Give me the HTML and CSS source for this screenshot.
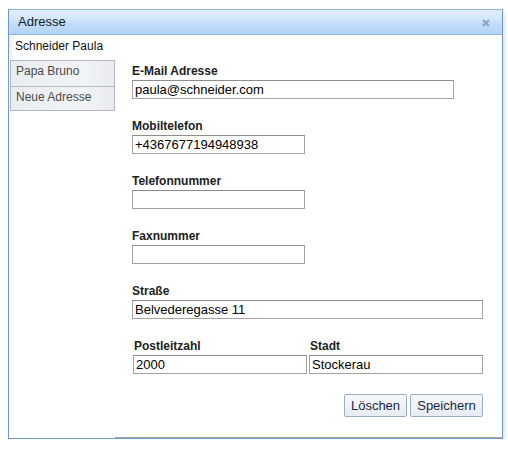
FILE: index.html
```html
<!DOCTYPE html>
<html>
<head>
<meta charset="utf-8">
<link rel="stylesheet" href="styles.css">
</head>
<body>
<div class="page">
  <div class="window">
    <div class="titlebar">
      <span class="title">Adresse</span>
      <svg class="close" width="8" height="8" viewBox="0 0 8 8"><path d="M1 1 L7 7 M7 1 L1 7" stroke="#8ba3bf" stroke-width="2"/></svg>
    </div>
    <div class="wbody">
      <div class="tabs">
        <div class="tab selected">Schneider Paula</div>
        <div class="tab">Papa Bruno</div>
        <div class="tab last">Neue Adresse</div>
      </div>
      <div class="content">
        <div class="field">
          <label class="lbl">E-Mail Adresse</label>
          <div class="input w-email">paula@schneider.com</div>
        </div>
        <div class="field">
          <label class="lbl">Mobiltelefon</label>
          <div class="input w-short">+4367677194948938</div>
        </div>
        <div class="field">
          <label class="lbl">Telefonnummer</label>
          <div class="input w-short"></div>
        </div>
        <div class="field">
          <label class="lbl">Faxnummer</label>
          <div class="input w-short"></div>
        </div>
        <div class="field">
          <label class="lbl">Straße</label>
          <div class="input w-full">Belvederegasse 11</div>
        </div>
        <div class="row">
          <div class="col">
            <label class="lbl">Postleitzahl</label>
            <div class="input w-col">2000</div>
          </div>
          <div class="col">
            <label class="lbl">Stadt</label>
            <div class="input w-col">Stockerau</div>
          </div>
        </div>
        <div class="buttons">
          <button class="btn btn-del">Löschen</button>
          <button class="btn btn-save">Speichern</button>
        </div>
      </div>
    </div>
  </div>
</div>
</body>
</html>
```

FILE: styles.css
```css
html, body {
  margin: 0;
  padding: 0;
  background: #ffffff;
  font-family: "Liberation Sans", Arial, sans-serif;
}

.page {
  padding: 9px 0 0 8px;
}

.window {
  width: 495px;
  height: 430px;
  box-sizing: border-box;
  border: 1px solid #6f9acb;
  border-top-color: #8fb2de;
  display: flex;
  flex-direction: column;
  background: #ffffff;
  box-shadow: 2px 3px 4px rgba(0, 0, 0, 0.12);
}

.titlebar {
  height: 25px;
  box-sizing: border-box;
  border-bottom: 1px solid #8db3e0;
  background: linear-gradient(#dfedfc, #d3e6fb 40%, #c3ddf9 55%, #b2d3f7);
  display: flex;
  align-items: center;
  justify-content: space-between;
  padding: 0 12px 0 9px;
}

.title {
  font-size: 13px;
  line-height: 24px;
  color: #0f1a2b;
}

.close {
  display: block;
  margin-top: 1px;
}

.wbody {
  flex: 1;
  display: flex;
}

.tabs {
  width: 106px;
  flex: none;
}

.tab {
  font-size: 12px;
  box-sizing: border-box;
  margin-left: 1px;
  height: 26px;
  line-height: 20px;
  padding: 0 0 5px 5px;
  border: 1px solid #b2b9c5;
  border-bottom: none;
  background: linear-gradient(to right, #eaedf0, #f1f3f5 70%, #e9ebee);
  color: #4b4b4b;
}

.tab.last {
  height: 25px;
  border-bottom: 1px solid #b2b9c5;
}

.tab.selected {
  margin-left: 0;
  height: 25px;
  line-height: 22px;
  padding: 0 0 3px 6px;
  border: none;
  background: linear-gradient(to right, #ececec, #ffffff 6px);
  color: #111111;
}

.content {
  flex: 1;
  border-bottom: 1px solid #a7a7a7;
  padding: 29px 18px 0 17px;
}

.field {
  margin-bottom: 20px;
}

.lbl {
  display: block;
  font-size: 12px;
  font-weight: bold;
  line-height: 14px;
  color: #222222;
  margin-bottom: 2px;
}

.input {
  box-sizing: border-box;
  height: 19px;
  border: 1px solid #a3a3a3;
  border-top-color: #8e8e8e;
  background: #ffffff;
  font-size: 13px;
  line-height: 17px;
  padding-left: 2px;
  color: #000000;
  white-space: nowrap;
}

.w-email { width: 322px; }
.w-short { width: 173px; }
.w-full { width: 351px; }
.w-col { width: 174px; margin-left: 1px; }

.row {
  display: grid;
  grid-template-columns: 176px 176px;
  margin-top: 5px;
}

.col .lbl {
  padding-left: 2px;
}

.col + .col .input {
  margin-left: 1px;
}

.buttons {
  display: flex;
  justify-content: flex-end;
  gap: 3px;
  margin-top: 20px;
  margin-right: 1px;
}

.btn {
  box-sizing: border-box;
  height: 23px;
  padding: 0;
  border: 1px solid #98aec6;
  border-radius: 2px;
  background: linear-gradient(#f6f8fb, #e7edf3);
  font-family: "Liberation Sans", Arial, sans-serif;
  font-size: 13px;
  color: #1a2540;
}

.btn-del { width: 63px; }
.btn-save { width: 73px; }
```
